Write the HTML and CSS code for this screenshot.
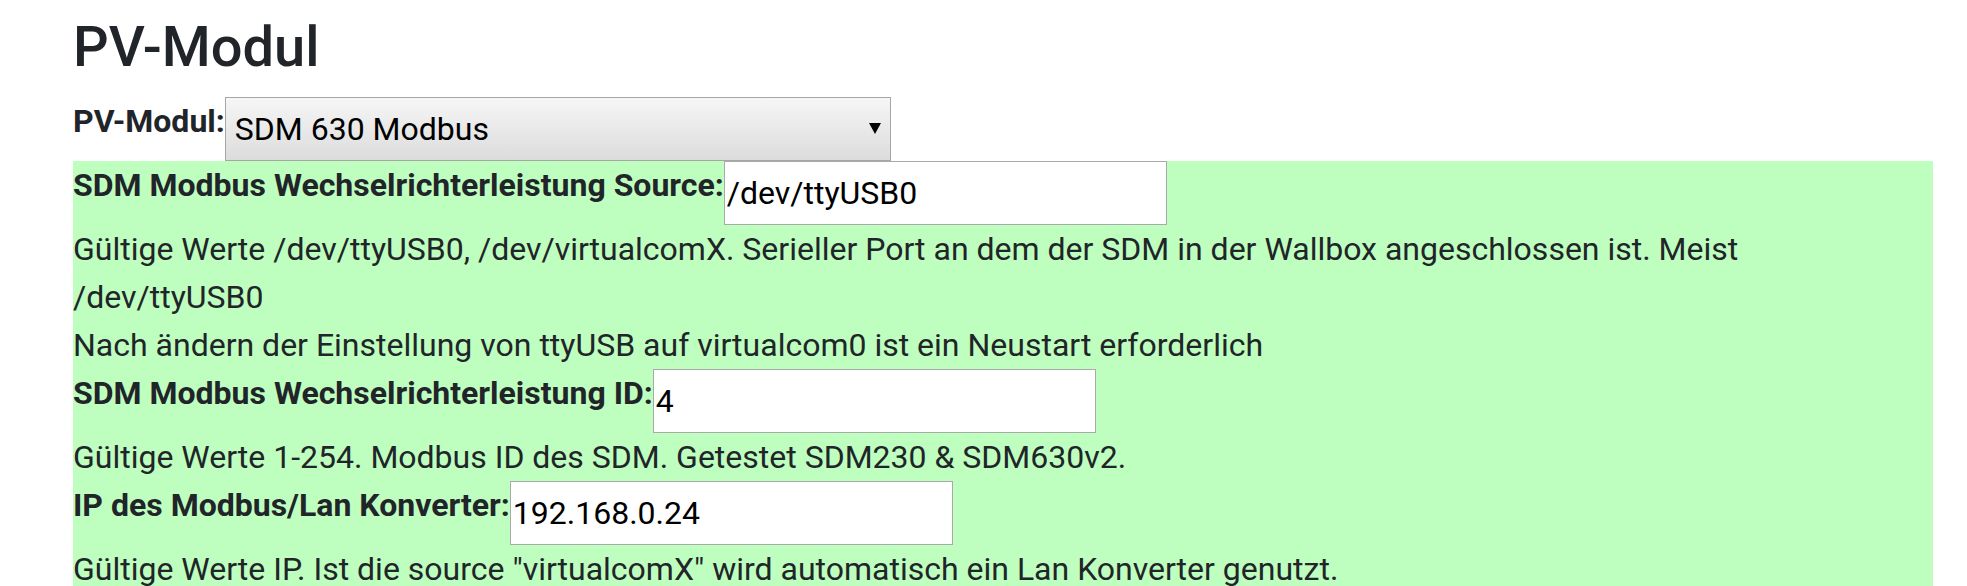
FILE: index.html
```html
<!DOCTYPE html>
<html lang="de">
<head>
<meta charset="utf-8">
<title>PV-Modul</title>
<link rel="stylesheet" href="styles.css">
</head>
<body>
<div class="page">
  <h3 class="title">PV-Modul</h3>
  <div class="field">
    <label class="lbl" for="pvwattmodul">PV-Modul:</label>
    <span class="select-wrap">
      <select id="pvwattmodul" class="select">
        <option selected>SDM 630 Modbus</option>
      </select>
      <svg class="arrow" width="12" height="11" viewBox="0 0 12 11" aria-hidden="true"><path d="M0 0H12L6 11Z" fill="#000"/></svg>
    </span>
  </div>
  <div class="section section--green">
    <div class="field">
      <label class="lbl" for="wrsdmlp1source">SDM Modbus Wechselrichterleistung Source:</label>
      <input class="input" id="wrsdmlp1source" type="text" value="/dev/ttyUSB0">
    </div>
    <p class="hint">Gültige Werte /dev/ttyUSB0, /dev/virtualcomX. Serieller Port an dem der SDM in der Wallbox angeschlossen ist. Meist /dev/ttyUSB0<br>Nach ändern der Einstellung von ttyUSB auf virtualcom0 ist ein Neustart erforderlich</p>
    <div class="field">
      <label class="lbl" for="wrsdmid">SDM Modbus Wechselrichterleistung ID:</label>
      <input class="input" id="wrsdmid" type="text" value="4">
    </div>
    <p class="hint">Gültige Werte 1-254. Modbus ID des SDM. Getestet SDM230 &amp; SDM630v2.</p>
    <div class="field">
      <label class="lbl" for="wrsdmlanip">IP des Modbus/Lan Konverter:</label>
      <input class="input" id="wrsdmlanip" type="text" value="192.168.0.24">
    </div>
    <p class="hint">Gültige Werte IP. Ist die source "virtualcomX" wird automatisch ein Lan Konverter genutzt.</p>
  </div>
</div>
</body>
</html>
```

FILE: styles.css
```css
html, body {
  margin: 0;
  padding: 0;
  background: #ffffff;
}

body {
  font-family: Roboto, "Liberation Sans", sans-serif;
  font-size: 32px;
  line-height: 1.5;
  color: #212529;
}

.page {
  padding: 14px 34px 0 73px;
}

.title {
  margin: 0 0 16px 0;
  font-size: 56px;
  font-weight: 500;
  line-height: 1.2;
}

.field {
  display: flex;
  align-items: flex-start;
}

.lbl {
  font-weight: 700;
  line-height: 48px;
  white-space: nowrap;
}

.select-wrap {
  position: relative;
  display: block;
}

.select {
  -webkit-appearance: none;
  appearance: none;
  display: block;
  box-sizing: border-box;
  width: 666px;
  height: 64px;
  margin: 0;
  padding: 0 40px 0 9px;
  border: 1px solid #a6a6a6;
  border-radius: 0;
  background: linear-gradient(#f6f6f6, #dcdcdc);
  font-family: Roboto, "Liberation Sans", sans-serif;
  font-size: 32px;
  color: #000000;
}

.arrow {
  position: absolute;
  right: 10px;
  top: 26px;
  pointer-events: none;
}

.section--green {
  background: #befebe;
  min-height: 430px;
}

.input {
  box-sizing: border-box;
  width: 443px;
  height: 64px;
  margin: 0;
  padding: 1px 2px;
  border: 1px solid #a9a9a9;
  border-radius: 0;
  background: #ffffff;
  font-family: Roboto, "Liberation Sans", sans-serif;
  font-size: 32px;
  color: #000000;
  outline: none;
}

.hint {
  margin: 0;
  line-height: 48px;
}
```
